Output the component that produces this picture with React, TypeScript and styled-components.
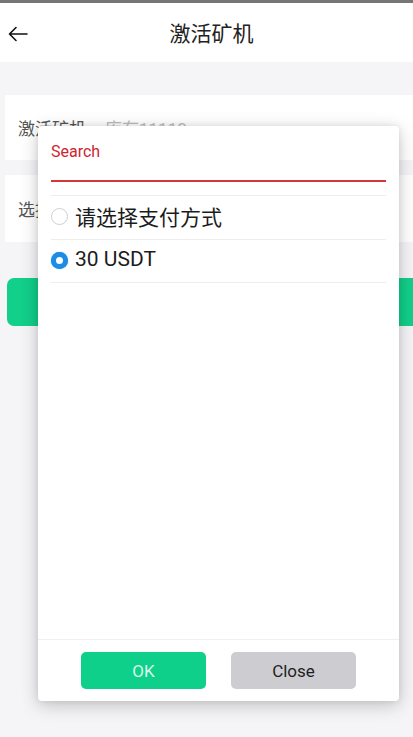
import React from "react";
import styled, { createGlobalStyle } from "styled-components";

const Global = createGlobalStyle`
  html, body { margin: 0; padding: 0; }
  body {
    background: #f5f5f7;
    font-family: Roboto, "Noto Sans CJK SC", sans-serif;
    width: 413px;
    height: 737px;
    overflow: hidden;
  }
`;

const Page = styled.div`
  position: relative;
  width: 413px;
  height: 737px;
  background: #f5f5f7;
  overflow: hidden;
`;

const StatusLine = styled.div`
  height: 3px;
  background: #767676;
`;

const Header = styled.header`
  height: 59px;
  background: #fff;
  display: flex;
  align-items: center;
  justify-content: center;
  position: relative;
  padding-left: 10px;
`;

const Back = styled.div`
  position: absolute;
  left: 7px;
  top: 20px;
  width: 22px;
  height: 22px;
  display: flex;
`;

const Title = styled.h1`
  margin: 0;
  font-size: 21px;
  font-weight: 400;
  color: #222;
  line-height: 1;
  padding-top: 4px;
`;

const Body = styled.div`
  display: flex;
  flex-direction: column;
  padding: 33px 0 0 5px;
`;

const Card = styled.div<{ $h: number; $mt?: number }>`
  height: ${(p) => p.$h}px;
  margin-top: ${(p) => p.$mt ?? 0}px;
  margin-right: -10px;
  background: #fff;
  display: flex;
  align-items: center;
  padding-left: 13px;
  font-size: 17px;
  color: #555;
`;

const Muted = styled.span`
  color: #bbb;
  margin-left: 19px;
`;

const GreenBar = styled.div`
  height: 48px;
  margin: 36px -20px 0 2px;
  background: #12cf8a;
  border-radius: 7px;
`;

const Dialog = styled.div`
  position: absolute;
  left: 38px;
  top: 126px;
  width: 361px;
  height: 575px;
  background: #fff;
  border-radius: 4px;
  box-shadow: 0 4px 18px rgba(0, 0, 0, 0.22), 0 0 6px rgba(0, 0, 0, 0.08);
  display: flex;
  flex-direction: column;
`;

const SearchBox = styled.div`
  padding: 16px 13px 0;
`;

const SearchLabel = styled.div`
  font-size: 16px;
  line-height: 20px;
  color: #cf2431;
`;

const SearchInput = styled.div`
  height: 18px;
  border-bottom: 2px solid #d4363c;
`;

const List = styled.div`
  margin: 13px 13px 0;
  flex: 1;
`;

const Row = styled.div<{ $last?: boolean }>`
  box-sizing: border-box;
  height: 44px;
  padding-bottom: 4px;
  border-top: 1px solid #ededed;
  ${(p) => (p.$last ? "border-bottom: 1px solid #ededed;" : "")}
  display: flex;
  align-items: center;
  gap: 7px;
  font-size: 21px;
  color: #1c1c1c;
`;

const Radio = styled.span<{ $checked?: boolean }>`
  width: 17px;
  height: 17px;
  box-sizing: border-box;
  border-radius: 50%;
  flex: none;
  margin-top: 2px;
  ${(p) =>
    p.$checked
      ? "background: #fff; border: 5.5px solid #1c8ce6; box-shadow: 0 0 1px #1c8ce6;"
      : "background: #fff; border: 1.5px solid #cfcfcf;"}
`;

const Footer = styled.div`
  border-top: 1px solid #f0f0f0;
  padding: 12px 0;
  display: flex;
  justify-content: center;
  gap: 25px;
`;

const Btn = styled.button<{ $kind: "ok" | "close" }>`
  width: 125px;
  height: 37px;
  border: none;
  border-radius: 5px;
  font-family: Roboto, sans-serif;
  font-size: 17px;
  background: ${(p) => (p.$kind === "ok" ? "#0fd08b" : "#cdccd0")};
  color: ${(p) => (p.$kind === "ok" ? "#d6f7e8" : "#1e1e1e")};
  padding: 0;
`;

export default function App() {
  return (
    <Page>
      <Global />
      <StatusLine />
      <Header>
        <Back>
          <svg width="22" height="22" viewBox="0 0 22 22" fill="none" stroke="#111" strokeWidth="1.6" strokeLinecap="round" strokeLinejoin="round">
            <path d="M20 11H2.5M9 4.5L2.5 11L9 17.5" />
          </svg>
        </Back>
        <Title>激活矿机</Title>
      </Header>
      <Body>
        <Card $h={65}>
          激活矿机<Muted>库存11110</Muted>
        </Card>
        <Card $h={67} $mt={15}>
          选择支付方式
        </Card>
        <GreenBar />
      </Body>
      <Dialog>
        <SearchBox>
          <SearchLabel>Search</SearchLabel>
          <SearchInput />
        </SearchBox>
        <List>
          <Row>
            <Radio />
            请选择支付方式
          </Row>
          <Row $last>
            <Radio $checked />
            30 USDT
          </Row>
        </List>
        <Footer>
          <Btn $kind="ok">OK</Btn>
          <Btn $kind="close">Close</Btn>
        </Footer>
      </Dialog>
    </Page>
  );
}
